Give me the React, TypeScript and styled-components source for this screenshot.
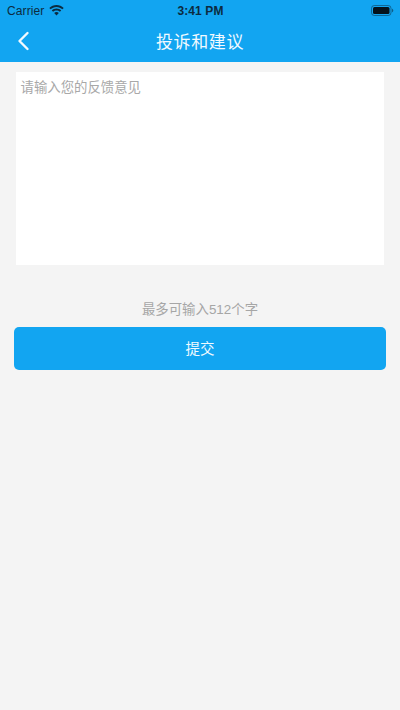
import React from "react";
import styled, { createGlobalStyle } from "styled-components";

const Global = createGlobalStyle`
  html, body { margin: 0; padding: 0; background: #f4f4f4; }
  * { box-sizing: border-box; }
`;

const Page = styled.div`
  width: 400px;
  height: 710px;
  background: #f4f4f4;
  overflow: hidden;
  font-family: "Liberation Sans", "Noto Sans CJK SC", sans-serif;
  display: flex;
  flex-direction: column;
`;

const Header = styled.header`
  height: 62px;
  background: #12a5f1;
  display: flex;
  flex-direction: column;
`;

const StatusBar = styled.div`
  height: 20px;
  padding: 1px 6px 0 7px;
  display: grid;
  grid-template-columns: 1fr auto 1fr;
  align-items: center;
  color: #0c2b40;
  font-size: 12px;
  letter-spacing: 0.1px;
`;

const StatusLeft = styled.div`
  display: flex;
  align-items: center;
  gap: 5px;
`;

const StatusTime = styled.div`
  font-weight: 700;
  font-size: 12px;
`;

const StatusRight = styled.div`
  display: flex;
  justify-content: flex-end;
`;

const NavBar = styled.div`
  height: 42px;
  display: flex;
  align-items: center;
  justify-content: center;
  position: relative;
  color: #f2faff;
  font-size: 17px;
  letter-spacing: 0.6px;
  padding-bottom: 1px;
`;

const BackIcon = styled.svg`
  position: absolute;
  left: 17px;
  top: 11px;
`;

const Content = styled.main`
  display: flex;
  flex-direction: column;
  padding: 10px 14px 0;
`;

const InputCard = styled.div`
  margin: 0 2px;
  height: 193px;
  background: #fff;
  padding: 6px 5px;
  color: #a8a8a8;
  font-size: 13.4px;
  line-height: 20px;
  text-indent: -0.5px;
`;

const Hint = styled.div`
  margin-top: 35px;
  height: 19px;
  text-align: center;
  color: #a6a6a6;
  font-size: 13.4px;
  line-height: 20px;
`;

const Submit = styled.button`
  margin-top: 8px;
  height: 43px;
  border: 0;
  border-radius: 5px;
  background: #12a5f1;
  color: #f2faff;
  font: inherit;
  font-size: 14.5px;
  padding: 0 0 2px;
`;

export default function App() {
  return (
    <Page>
      <Global />
      <Header>
        <StatusBar>
          <StatusLeft>
            Carrier
            <svg width="15" height="11" viewBox="0 0 15 11" fill="#0c2b40">
              <path d="M7.500 0C4.700 0 2.200 1.100.3 2.900l1.300 1.400C3.100 2.800 5.200 1.900 7.500 1.900s4.400.9 5.900 2.400l1.300-1.400C12.800 1.100 10.300 0 7.500 0z" />
              <path d="M7.500 3.500c-1.800 0-3.400.7-4.700 1.900l1.300 1.400c.9-.9 2.100-1.400 3.400-1.400s2.500.5 3.400 1.400l1.300-1.400C10.900 4.200 9.300 3.500 7.500 3.500z" />
              <path d="M7.500 7c-.9 0-1.700.3-2.300.9l2.300 2.600 2.300-2.600C9.200 7.300 8.400 7 7.500 7z" />
            </svg>
          </StatusLeft>
          <StatusTime>3:41 PM</StatusTime>
          <StatusRight>
            <svg width="23" height="11" viewBox="0 0 23 11">
              <rect x="0.500" y="0.500" width="19.500" height="10" rx="2.800" fill="none" stroke="#0c2b40" strokeOpacity="0.5" />
              <rect x="2" y="2" width="16.500" height="7" rx="1.500" fill="#04121c" />
              <path d="M21 3.700v3.600c.8-.3 1.300-1 1.300-1.800s-.5-1.500-1.300-1.800z" fill="#0c2b40" fillOpacity="0.6" />
            </svg>
          </StatusRight>
        </StatusBar>
        <NavBar>
          <BackIcon width="13" height="20" viewBox="0 0 13 20" fill="none" stroke="#f2faff" strokeWidth="2.400" strokeLinecap="round" strokeLinejoin="round">
            <path d="M10.500 2 2.500 10l8 8" />
          </BackIcon>
          投诉和建议
        </NavBar>
      </Header>
      <Content>
        <InputCard>请输入您的反馈意见</InputCard>
        <Hint>最多可输入512个字</Hint>
        <Submit>提交</Submit>
      </Content>
    </Page>
  );
}
